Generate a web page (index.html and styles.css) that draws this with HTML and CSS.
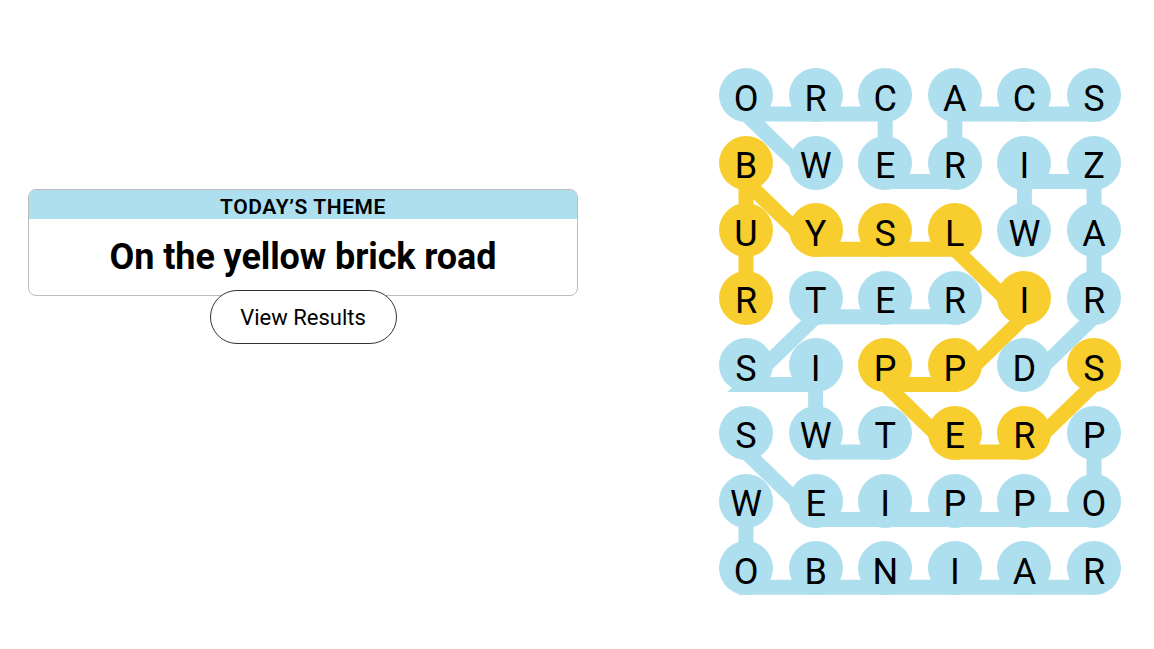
FILE: index.html
```html
<!DOCTYPE html>
<html lang="en">
<head>
  <meta charset="UTF-8">
  <meta name="viewport" content="width=device-width, initial-scale=1.0">
  <title>Strands</title>
  <link rel="stylesheet" href="styles.css">
</head>
<body>
  <main class="game">
    <section class="info">
      <div class="theme-card">
        <h2 class="theme-label">TODAY’S THEME</h2>
        <p class="theme-title">On the yellow brick road</p>
      </div>
      <button class="results-btn">View Results</button>
    </section>

    <section class="board">
      <!-- word paths, drawn under the letters -->
      <svg class="paths" width="402" height="528" viewBox="0 0 402 528">
        <g class="found">
          <polyline points="375,46 305.4,46 235.8,46 235.8,113.6 166.2,113.6 166.2,46 96.6,46 27,46 96.6,113.6"/>
          <polyline points="305.4,181.2 305.4,113.6 375,113.6 375,181.2 375,248.8 305.4,316.4"/>
          <polyline points="166.2,384 96.6,384 96.6,316.4 27,316.4 96.6,248.8 166.2,248.8 235.8,248.8"/>
          <polyline points="375,384 375,451.6 305.4,451.6 235.8,451.6 166.2,451.6 96.6,451.6 27,384"/>
          <polyline points="375,519.2 305.4,519.2 235.8,519.2 166.2,519.2 96.6,519.2 27,519.2 27,451.6"/>
        </g>
        <g class="spangram-path">
          <polyline points="27,248.8 27,181.2 27,113.6 96.6,181.2 166.2,181.2 235.8,181.2 305.4,248.8 235.8,316.4 166.2,316.4 235.8,384 305.4,384 375,316.4"/>
        </g>
      </svg>

      <div class="grid">
        <div class="cell">O</div>
        <div class="cell">R</div>
        <div class="cell">C</div>
        <div class="cell">A</div>
        <div class="cell">C</div>
        <div class="cell">S</div>

        <div class="cell spangram">B</div>
        <div class="cell">W</div>
        <div class="cell">E</div>
        <div class="cell">R</div>
        <div class="cell">I</div>
        <div class="cell">Z</div>

        <div class="cell spangram">U</div>
        <div class="cell spangram">Y</div>
        <div class="cell spangram">S</div>
        <div class="cell spangram">L</div>
        <div class="cell">W</div>
        <div class="cell">A</div>

        <div class="cell spangram">R</div>
        <div class="cell">T</div>
        <div class="cell">E</div>
        <div class="cell">R</div>
        <div class="cell spangram">I</div>
        <div class="cell">R</div>

        <div class="cell">S</div>
        <div class="cell">I</div>
        <div class="cell spangram">P</div>
        <div class="cell spangram">P</div>
        <div class="cell">D</div>
        <div class="cell spangram">S</div>

        <div class="cell">S</div>
        <div class="cell">W</div>
        <div class="cell">T</div>
        <div class="cell spangram">E</div>
        <div class="cell spangram">R</div>
        <div class="cell">P</div>

        <div class="cell">W</div>
        <div class="cell">E</div>
        <div class="cell">I</div>
        <div class="cell">P</div>
        <div class="cell">P</div>
        <div class="cell">O</div>

        <div class="cell">O</div>
        <div class="cell">B</div>
        <div class="cell">N</div>
        <div class="cell">I</div>
        <div class="cell">A</div>
        <div class="cell">R</div>
      </div>
    </section>
  </main>
</body>
</html>
```

FILE: styles.css
```css
body {
  margin: 0;
  font-family: Roboto, "Liberation Sans", Arial, sans-serif;
  color: #000;
  background-color: #fff;
}
.game {
  display: flex;
  justify-content: space-between;
  align-items: flex-start;
  padding: 0 33px 0 28px;
}
.info {
  width: 550px;
  padding-top: 189px;
  display: flex;
  flex-direction: column;
  align-items: center;
}
.theme-card {
  width: 100%;
  box-sizing: border-box;
  border: 1px solid #bcbcbc;
  border-radius: 8px;
  overflow: hidden;
}
.theme-label {
  margin: 0;
  height: 29px;
  background-color: #aedfee;
  font-size: 21px;
  font-weight: 600;
  letter-spacing: 0.6px;
  line-height: 34px;
  text-align: center;
}
.theme-title {
  margin: 0;
  height: 76px;
  font-size: 36px;
  font-weight: 700;
  letter-spacing: -0.1px;
  line-height: 76px;
  text-align: center;
}
.results-btn {
  margin-top: -6px;
  width: 187px;
  height: 54px;
  border: 1px solid #333;
  border-radius: 27px;
  background-color: #fff;
  font-family: inherit;
  font-size: 22px;
  color: #000;
  cursor: pointer;
}
.board {
  position: relative;
  margin-top: 68px;
}
.paths {
  position: absolute;
  top: 0;
  left: 0;
  overflow: visible;
}
.paths polyline {
  fill: none;
  stroke-width: 15;
  stroke-linejoin: miter;
  stroke-linecap: butt;
}
.found polyline {
  stroke: #aedfee;
}
.spangram-path polyline {
  stroke: #f7ce2e;
}
.grid {
  position: relative;
  display: grid;
  grid-template-columns: repeat(6, 54px);
  grid-auto-rows: 54px;
  column-gap: 15.6px;
  row-gap: 13.6px;
}
.cell {
  display: flex;
  align-items: center;
  justify-content: center;
  box-sizing: border-box;
  padding-top: 7px;
  border-radius: 50%;
  background-color: #aedfee;
  font-size: 36px;
  line-height: 1;
}
.cell.spangram {
  background-color: #f7ce2e;
}
```
